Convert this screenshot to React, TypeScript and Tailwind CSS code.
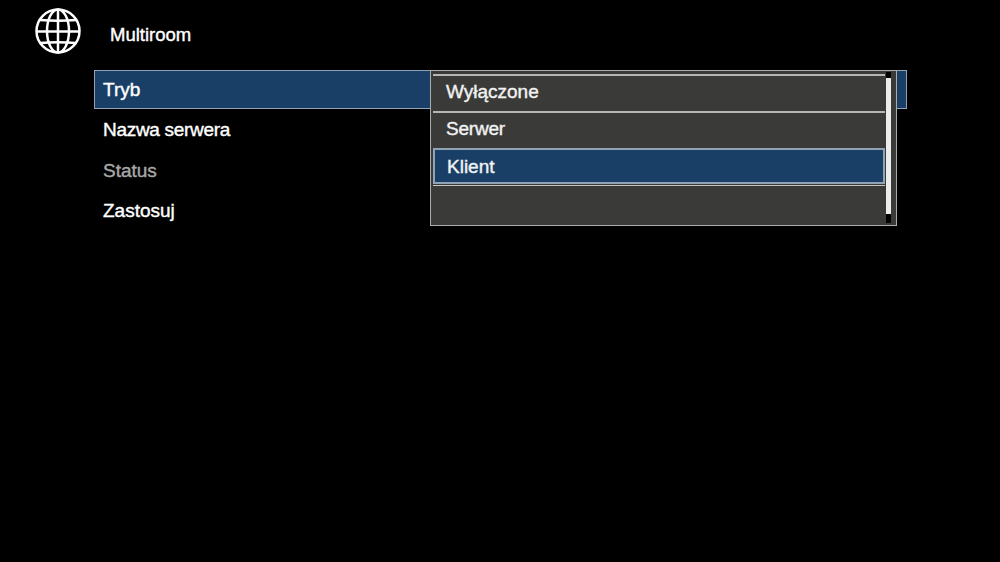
const rows = [
  { label: "Nazwa serwera", color: "text-white tracking-[-0.3px]", height: "h-[41px] pt-[1px]" },
  { label: "Status", color: "text-[#a8a8a8]", height: "h-[40px] pt-[2px]" },
  { label: "Zastosuj", color: "text-white", height: "h-[41px] pt-[2px]" },
];

function GlobeIcon() {
  return (
    <svg viewBox="0 0 46 46" className="w-[46px] h-[46px]" fill="none" stroke="white" strokeWidth="2.5">
      <circle cx="23" cy="23" r="21.5" />
      <ellipse cx="23" cy="23" rx="11" ry="21.5" />
      <path d="M23 1.5V44.5" />
      <path d="M1.5 23.5H44.5" />
      <path d="M5 12Q23 13.5 41 12" />
      <path d="M5 35Q23 33.5 41 35" />
    </svg>
  );
}

function Dropdown() {
  return (
    <div className="absolute left-[336px] top-0 w-[467px] h-[156px] bg-[#3a3b38] border border-[#a9adaa] pl-[2px] pt-[3px] flex">
      <div className="w-[452px] flex flex-col">
        <div className="h-[39px] border-t-2 border-b-2 border-[#b5b7b4] flex items-center pl-[13px] pb-[3px] text-[#f2f2f2]">
          Wyłączone
        </div>
        <div className="h-[35px] flex items-center pl-[13px] pb-[2px] tracking-[-0.2px] text-[#f2f2f2]">Serwer</div>
        <div className="h-[38px] border-b border-[#c4c6c3] pb-px">
          <div className="h-full bg-[#193f66] border-2 border-[#8fa3b5] flex items-center pl-[12px] pt-[2px] text-[#f2f2f2]">
            Klient
          </div>
        </div>
      </div>
      <div className="ml-px w-[5px] flex flex-col -mt-[2px] h-[151px]">
        <div className="h-[6px] bg-black" />
        <div className="flex-1 bg-[#ececec]" />
        <div className="h-[9px] bg-black" />
      </div>
    </div>
  );
}

export default function App() {
  return (
    <div className="w-[1000px] h-[562px] bg-black overflow-hidden font-['Liberation_Sans',Arial,sans-serif] text-[19px] [-webkit-text-stroke:0.4px]">
      <div className="h-[70px] flex items-center pl-[35px] pb-[8px]">
        <GlobeIcon />
        <span className="ml-[29px] mt-[8px] text-[18.5px] text-white">Multiroom</span>
      </div>

      <div className="relative ml-[94px] w-[813px]">
        <div className="h-[39px] bg-[#193f66] border border-[#8fa3b5] flex items-center pl-[8px] pt-[2px] text-white">
          Tryb
        </div>
        {rows.map((row) => (
          <div key={row.label} className={`${row.height} flex items-center pl-[9px] ${row.color}`}>
            {row.label}
          </div>
        ))}
        <Dropdown />
      </div>
    </div>
  );
}
